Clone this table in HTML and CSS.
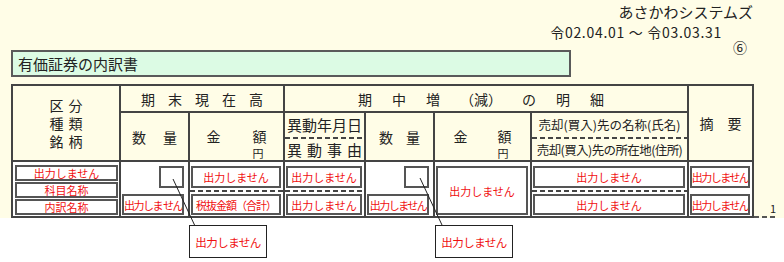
FILE: index.html
```html
<!DOCTYPE html>
<html lang="ja">
<head>
<meta charset="utf-8">
<title>有価証券の内訳書</title>
<link rel="stylesheet" href="styles.css">
</head>
<body>
<div class="sheet">
  <header class="meta">
    <div class="company">あさかわシステムズ</div>
    <div class="period">令02.04.01 ～ 令03.03.31</div>
    <div class="sheet-no">⑥</div>
  </header>
  <div class="title">有価証券の内訳書</div>
  <div class="sheet-row">
    <div class="grid">
      <div class="hc kubun">
        <span class="ls5">区分</span>
        <span class="ls5">種類</span>
        <span class="ls5">銘柄</span>
      </div>
      <div class="hc kimatsu"><span class="ls13">期末現在高</span></div>
      <div class="hc kichu">
        <span>期</span><span>中</span><span>増</span><span>（減）</span><span>の</span><span>明</span><span>細</span>
      </div>
      <div class="hc tekiyo"><span class="ls14">摘要</span></div>

      <div class="hc"><span class="ls17">数量</span></div>
      <div class="hc amount"><span class="ls32 lbl">金額</span><span class="yen">円</span></div>
      <div class="hc split idou">
        <div class="top">異動年月日</div>
        <div class="dash"></div>
        <div class="bot"><span class="ls5">異動事由</span></div>
      </div>
      <div class="hc"><span class="ls13">数量</span></div>
      <div class="hc amount"><span class="ls30 lbl">金額</span><span class="yen">円</span></div>
      <div class="hc split baikyaku">
        <div class="top">売却(買入)先の名称(氏名)</div>
        <div class="dash"></div>
        <div class="bot tight">売却(買入)先の所在地(住所)</div>
      </div>

      <div class="dc stack">
        <div class="out">出力しません</div>
        <div class="out">科目名称</div>
        <div class="out">内訳名称</div>
      </div>
      <div class="dc qty">
        <div class="out t mini"></div>
        <div class="sep"></div>
        <div class="out b narrow">出力しま せん</div>
      </div>
      <div class="dc">
        <div class="out t">出力しません</div>
        <div class="sep dashed"></div>
        <div class="out b tax">税抜金額（合計）</div>
      </div>
      <div class="dc">
        <div class="out t">出力しません</div>
        <div class="sep dashed"></div>
        <div class="out b">出力しません</div>
      </div>
      <div class="dc qty">
        <div class="out t mini"></div>
        <div class="sep"></div>
        <div class="out b narrow">出力しません</div>
      </div>
      <div class="dc">
        <div class="out full">出力しません</div>
      </div>
      <div class="dc">
        <div class="out t">出力しません</div>
        <div class="sep dashed"></div>
        <div class="out b">出力しません</div>
      </div>
      <div class="dc">
        <div class="out t narrow">出力しません</div>
        <div class="sep"></div>
        <div class="out b narrow">出力しません</div>
      </div>
    </div>
    <div class="page-mark">1</div>
  </div>
</div>
<div class="callouts">
  <div class="callout">出力しません</div>
  <div class="callout">出力しません</div>
</div>
<svg class="leaders" width="784" height="262" viewBox="0 0 784 262" aria-hidden="true">
  <line x1="173" y1="179" x2="195" y2="226"/>
  <line x1="420" y1="178" x2="442" y2="225"/>
</svg>
</body>
</html>
```

FILE: styles.css
```css
* { box-sizing: border-box; }

body {
  margin: 0;
  width: 784px;
  height: 262px;
  background: #ffffff;
  font-family: "Noto Sans CJK JP", "Noto Sans", sans-serif;
  color: #222;
  position: relative;
  overflow: hidden;
}

.sheet {
  background: #fffde7;
}

.meta {
  height: 50px;
  display: flex;
  flex-direction: column;
  align-items: flex-end;
  padding: 3px 31px 0 0;
}
.company { font-size: 15px; line-height: 18px; }
.period {
  font-size: 14px;
  line-height: 16px;
  margin-top: 3px;
  margin-right: 31px;
  letter-spacing: 0.7px;
}
.sheet-no { font-size: 14px; line-height: 12px; margin-right: 6px; margin-top: 1px; }

.title {
  margin-left: 11px;
  width: 560px;
  height: 27px;
  border: 2px solid #5a5a5a;
  background: #dcfbe4;
  font-size: 15px;
  line-height: 23px;
  padding-left: 5px;
}

.sheet-row {
  display: flex;
  align-items: flex-end;
  margin-top: 7px;
}

.grid {
  margin-left: 11px;
  display: grid;
  grid-template-columns: 106px 67px 93px 79px 67px 95px 155px 63px;
  grid-template-rows: 25px 47px 54px;
  gap: 2px;
  padding: 2px;
  background: #444;
}

.hc {
  background: #fffde7;
  display: flex;
  align-items: center;
  justify-content: center;
  font-size: 14px;
  line-height: 16px;
  color: #222;
  white-space: nowrap;
}

.kubun {
  grid-column: 1;
  grid-row: 1 / 3;
  flex-direction: column;
  line-height: 18px;
}
.kimatsu { grid-column: 2 / 4; grid-row: 1; }
.kichu { grid-column: 4 / 8; grid-row: 1; gap: 20px; padding-right: 10px; }
.tekiyo { grid-column: 8; grid-row: 1 / 3; }

.ls5 { letter-spacing: 5px; margin-right: -5px; }
.ls13 { letter-spacing: 13px; margin-right: -13px; }
.ls14 { letter-spacing: 14px; margin-right: -14px; }
.ls17 { letter-spacing: 17px; margin-right: -17px; }
.ls30 { letter-spacing: 30px; margin-right: -30px; }
.ls32 { letter-spacing: 32px; margin-right: -32px; }

.amount {
  display: grid;
  place-items: center;
}
.amount > * { grid-area: 1 / 1; }
.amount .lbl { line-height: 14px; margin-bottom: 2px; }
.amount .yen {
  justify-self: end;
  align-self: end;
  font-size: 11px;
  line-height: 11px;
  margin: 0 3px 1px 0;
}

.split {
  flex-direction: column;
  align-items: stretch;
  justify-content: flex-start;
}
.split .top {
  height: 24px;
  display: flex;
  align-items: center;
  justify-content: center;
}
.split .dash {
  height: 2px;
  background: repeating-linear-gradient(90deg, #444 0 5px, transparent 5px 8px);
}
.split .bot {
  flex: 1;
  display: flex;
  align-items: center;
  justify-content: center;
}
.idou { font-size: 15px; }
.baikyaku { font-size: 12.5px; }
.baikyaku .tight { letter-spacing: -0.6px; }

.dc {
  background: #fff;
  display: flex;
  flex-direction: column;
  padding: 4px 2px 1px 1px;
}
.dc.stack { padding: 3px 1px 1px 2px; gap: 1px; }
.stack .out { flex: 1; }

.out {
  border: 2px solid #555;
  background: #fff;
  color: #f01010;
  font-size: 11px;
  line-height: 12px;
  display: flex;
  align-items: center;
  justify-content: center;
  white-space: nowrap;
  overflow: hidden;
}
.out.t { height: 22px; }
.out.b { height: 21px; }
.out.full { flex: 1; }
.out.narrow { letter-spacing: -1.5px; }
.out.tax { letter-spacing: -1px; }

.sep { height: 2px; margin: 2px -2px 2px -1px; }
.sep.dashed {
  background: repeating-linear-gradient(90deg, #444 0 5px, transparent 5px 8px);
}

.qty .out { margin-right: 2px; }
.qty .mini { width: 25px; align-self: flex-end; }

.page-mark {
  width: 24px;
  padding: 0 0 3px 16px;
  font-size: 11px;
  line-height: 13px;
  background: repeating-linear-gradient(90deg, #555 0 5px, transparent 5px 8px) bottom / 100% 2px no-repeat;
}

.callouts {
  display: flex;
  gap: 168px;
  padding: 7px 0 0 189px;
}
.callout {
  width: 78px;
  height: 33px;
  border: 1px solid #222;
  background: #fff;
  color: #f01010;
  font-size: 11.5px;
  letter-spacing: -0.5px;
  display: flex;
  align-items: center;
  justify-content: center;
}

.leaders {
  position: absolute;
  left: 0;
  top: 0;
  pointer-events: none;
}
.leaders line { stroke: #222; stroke-width: 1; }
```
